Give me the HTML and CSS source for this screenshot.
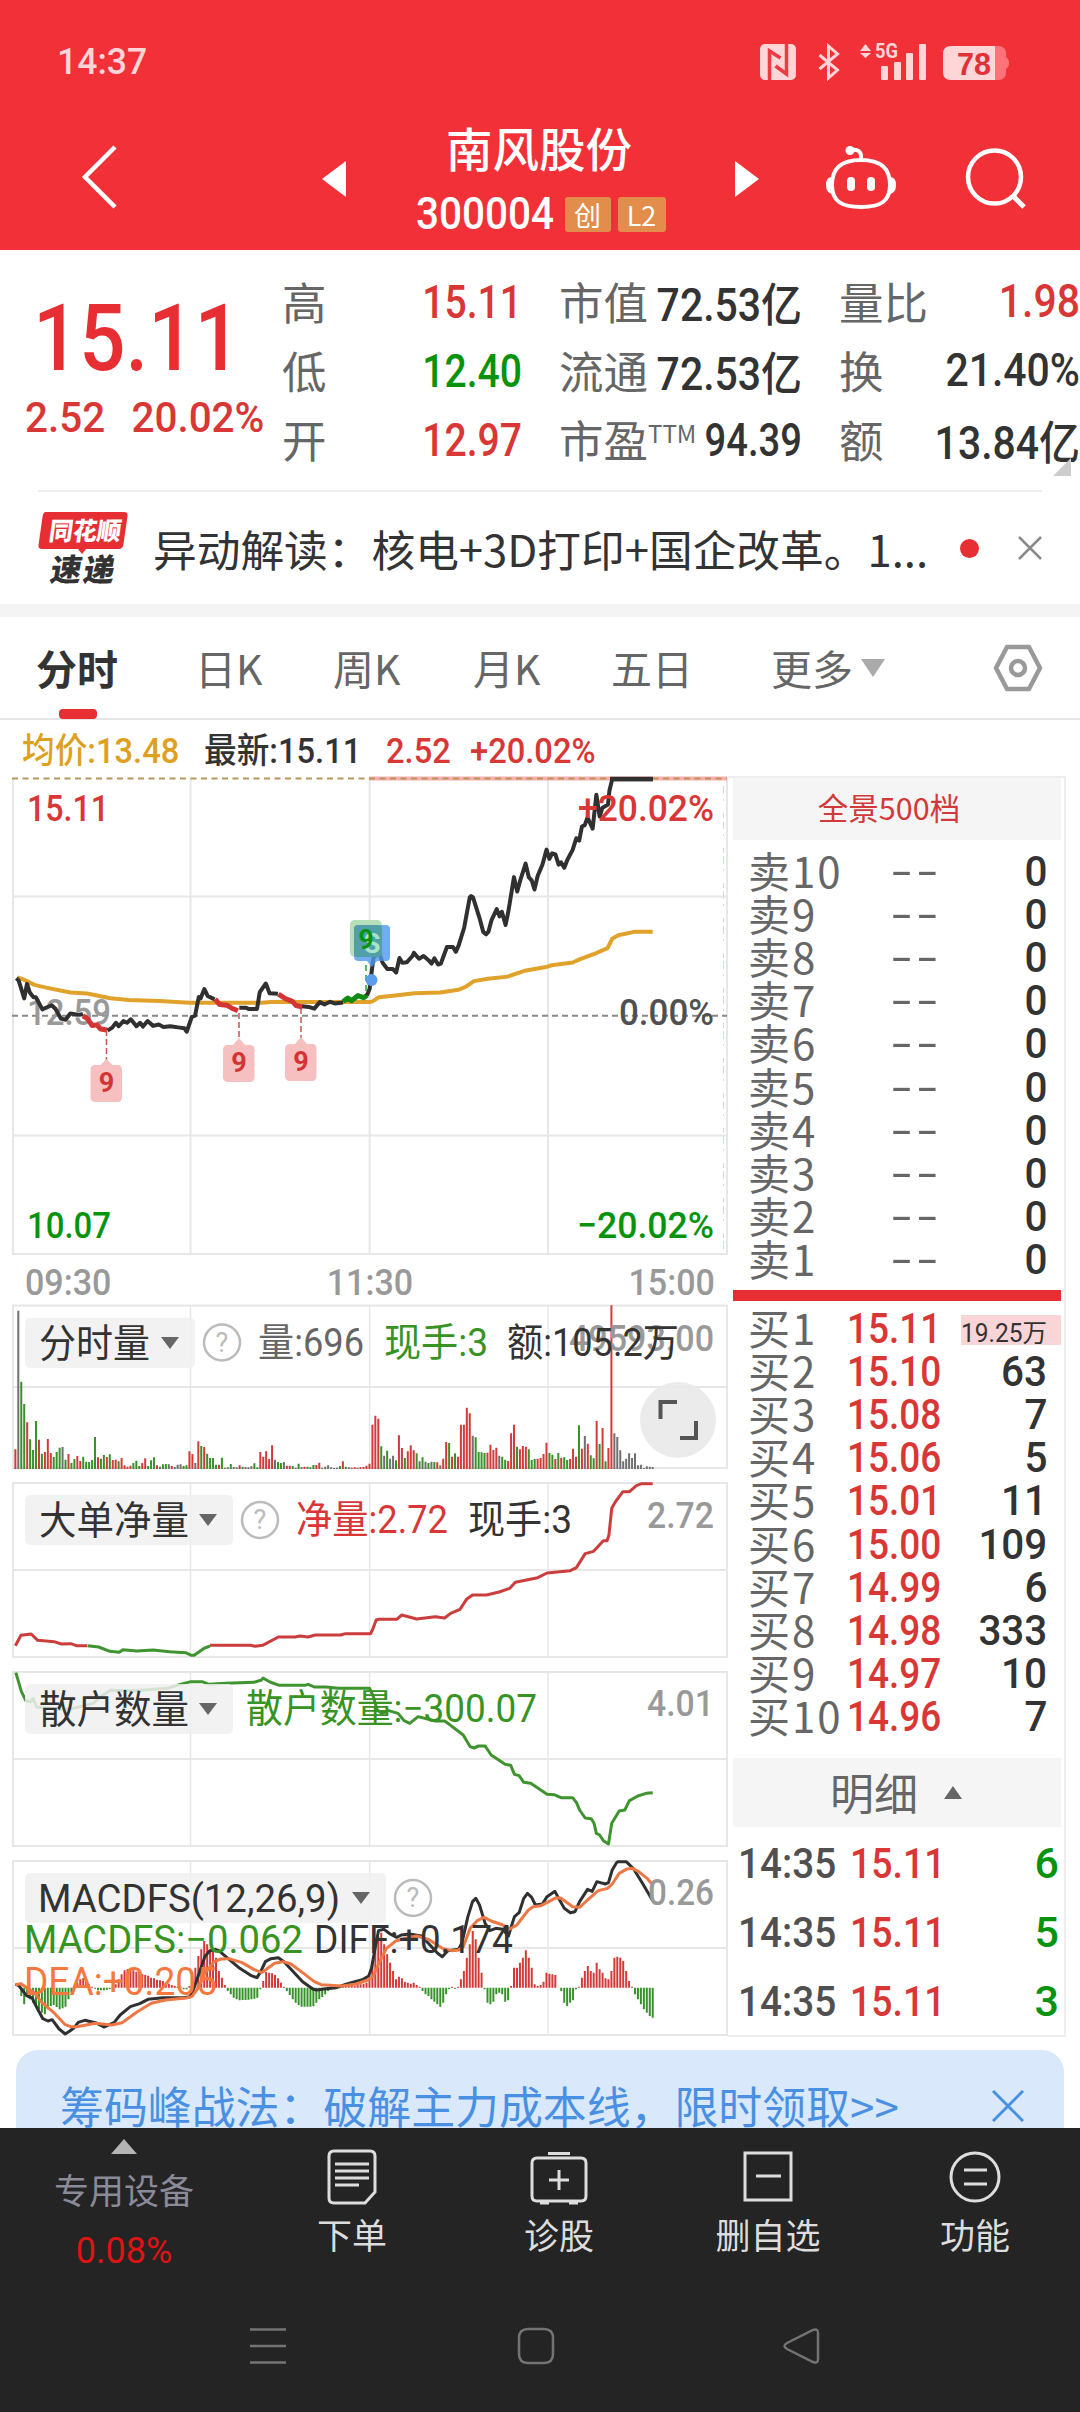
FILE: index.html
```html
<!DOCTYPE html>
<html lang="zh-CN">
<head>
<meta charset="utf-8">
<title>南风股份 300004</title>
<link rel="stylesheet" href="styles.css">
</head>
<body>
<div class="phone">
  <header class="top">
    <div class="status">
      <span class="clock">14:37</span>
      <svg class="status-icons" width="256" height="46" viewBox="756 40 256 46">
        <g fill="#ffd5d7">
          <rect x="760" y="44" width="36" height="36" rx="5"/>
          <path d="M860 51l5.500-7 5.500 7zM860 53l5.500 5 5.500-5z"/>
          <rect x="881" y="66" width="7" height="14" rx="1"/><rect x="894" y="62" width="7" height="18" rx="1"/>
          <rect x="906" y="53" width="7" height="27" rx="1"/><rect x="919" y="44" width="7" height="36" rx="1"/>
          <text x="875" y="58" class="net" textLength="23" lengthAdjust="spacingAndGlyphs">5G</text>
          <path d="M951 46h44v34h-44q-8 0-8-8v-18q0-8 8-8z"/>
        </g>
        <path d="M819.500 55l18 15-9 8V46l9 8-18 15" fill="none" stroke="#ffd5d7" stroke-width="3"/>
        <path d="M995 46h3q8 0 8 8v3q3 2 3 6t-3 6v3q0 8-8 8h-3z" fill="#ff7378"/>
        <path d="M769.500 80V51l11 7M786.500 44v30l-11-8" fill="none" stroke="#ef3a41" stroke-width="3.500"/>
        <text x="957" y="75" class="batt" textLength="34" lengthAdjust="spacingAndGlyphs">78</text>
      </svg>
    </div>
    <div class="titlebar">
      <svg class="back" width="40" height="68" viewBox="0 0 40 68"><path d="M35 4L5 34l30 30" fill="none" stroke="#fff" stroke-width="4.500"/></svg>
      <svg class="prev" width="24" height="36" viewBox="0 0 24 36"><path d="M24 0v36L0 18z" fill="#fff"/></svg>
      <div class="name">
        <h1>南风股份</h1>
        <div class="code"><span class="n">300004</span><b>创</b><b>L2</b></div>
      </div>
      <svg class="next" width="24" height="36" viewBox="0 0 24 36"><path d="M0 0v36l24-18z" fill="#fff"/></svg>
      <svg class="robot" width="72" height="66" viewBox="825 145 72 66">
        <path d="M861 160c-20 0-29 8-29 25 0 16 9 22 29 22s29-6 29-22c0-17-9-25-29-25zM861 159c1-8-4-10-9-9" fill="none" stroke="#fff" stroke-width="4"/>
        <circle cx="850" cy="150.500" r="4.500" fill="#fff"/><path d="M832 177q-6 0-6 8t6 9zM890 177q6 0 6 8t-6 9z" fill="#fff"/>
        <rect x="847" y="177" width="8" height="14" rx="4" fill="#fff"/><rect x="867" y="177" width="8" height="14" rx="4" fill="#fff"/>
      </svg>
      <svg class="search" width="62" height="62" viewBox="964 147 62 62"><circle cx="994.500" cy="177" r="26.500" fill="none" stroke="#fff" stroke-width="4.500"/><path d="M1013 196l11 11" stroke="#fff" stroke-width="5"/></svg>
    </div>
  </header>

  <section class="quote">
    <div class="last">
      <div class="price n">15.11</div>
      <div class="change n"><span>2.52</span><span>20.02%</span></div>
    </div>
    <dl class="c1">
      <div><dt>高</dt><dd class="n up">15.11</dd></div>
      <div><dt>低</dt><dd class="n down">12.40</dd></div>
      <div><dt>开</dt><dd class="n up">12.97</dd></div>
    </dl>
    <dl class="c2">
      <div><dt>市值</dt><dd class="n">72.53亿</dd></div>
      <div><dt>流通</dt><dd class="n">72.53亿</dd></div>
      <div><dt>市盈<sup>TTM</sup></dt><dd class="n pe">94.39</dd></div>
    </dl>
    <dl class="c3">
      <div><dt>量比</dt><dd class="n up">1.98</dd></div>
      <div><dt>换</dt><dd class="n">21.40%</dd></div>
      <div><dt>额</dt><dd class="n">13.84亿</dd></div>
    </dl>
    <i class="corner"></i>
  </section>

  <section class="news">
    <svg width="90" height="74" viewBox="38 510 90 74">
      <path d="M46 511h78q4 0 3.500 4l-4 28q-.5 5-5 5H86l-4 5-4-5H42q-4 0-3.500-4l4-28q.5-5 3.500-5z" fill="#e72e33"/>
      <text class="brand" transform="translate(48 539) skewX(-8)" textLength="72" lengthAdjust="spacingAndGlyphs" fill="#fff">同花顺</text>
      <text class="brand2" transform="translate(49 580) skewX(-10)" textLength="64" fill="#333">速递</text>
    </svg>
    <p>异动解读：核电+3D打印+国企改革。1...</p>
    <i class="dot"></i>
    <svg class="x" width="26" height="26" viewBox="0 0 26 26"><path d="M2 2l22 22M24 2L2 24" stroke="#8a8a8a" stroke-width="2.500"/></svg>
  </section>

  <nav class="tabs">
    <span class="on">分时</span><span>日K</span><span>周K</span><span>月K</span><span>五日</span><span>更多<i></i></span>
    <svg width="50" height="48" viewBox="0 0 50 48"><path d="M14 3h22l11 21-11 21H14L3 24z" fill="none" stroke="#999" stroke-width="4.500" stroke-linejoin="round"/><circle cx="25" cy="24" r="7" fill="none" stroke="#999" stroke-width="4.500"/></svg>
  </nav>

  <div class="legend n"><span class="avg">均价:13.48</span><span class="cur">最新:15.11</span><span class="up d1">2.52</span><span class="up d2">+20.02%</span></div>

  <main class="board">
    <div class="charts">
      <svg class="main" width="716" height="482" viewBox="12 776 716 482">
        <g class="grid"><path d="M13 778V1254H727V778M190.500 778v476M369.600 778v476M548 778v476M13 896.500h714M13 1135.500h714"/></g>
        <path d="M369 778.500H727" stroke="#f6aeb0" stroke-width="4"/>
        <path d="M12 778.500H727" stroke="#b79757" stroke-width="2" stroke-dasharray="6 4.500"/>
        <path d="M12 1015.700H727" stroke="#888" stroke-width="2" stroke-dasharray="6 4"/>
        <path d="M723.500 786V1252" stroke="#f3cccd" stroke-width="1" stroke-dasharray="8 5 2 12 5 3"/>
        <text class="t up" x="27" y="821" textLength="82" lengthAdjust="spacingAndGlyphs">15.11</text>
        <text class="t gray" x="27" y="1025" textLength="84" lengthAdjust="spacingAndGlyphs">12.59</text>
        <g class="trace" transform="translate(0 770) scale(.46556 .34439)">
          <path class="yellow" d="M37 602L50 608 74 624 99 632 151 646 187 649 237 663 277 668 342 671 407 676H562L582 674H794L800 672 814 660 854 654 890 648 945 646 985 638 1000 630 1018 613 1048 606 1090 600 1130 582 1170 573 1185 567 1230 559 1245 550 1275 535 1305 517 1315 490 1328 480 1362 470H1402"/>
          <path class="black" d="M35 605l5 6 12 52 6-42 6 25 8 14 5 0 14 35 20-12 8 10 12 29 10 3 10-18 20 4 7-3"/>
          <path class="redl" d="M178 714l10 8 10 20 10-2 8 12 14 3"/>
          <path class="black" d="M231 757l10-9 8-14 6 10 10-15 8 5 8-10 12 20 8-10 6 11 10-16 12 14 12-4 10 7 15-2 20 4 10 2 5 10 11-43 7-4 8-54 4 4 8-27 7 20 15 10"/>
          <path class="redl" d="M462 665l10 16 15 2 10 8 14 8"/>
          <path class="black" d="M514 690h14l6 4h18l6-49 13-25 8 28 18 2"/>
          <path class="redl" d="M598 651l15 13 15 8 8 12 14 4"/>
          <path class="black" d="M649 686l14 2 12 5 12-19 10 7 12-8 10 5 18-3"/>
          <path class="greenl" d="M737 672l10-10 8 8 14-15 12 6 8-7"/>
          <path class="black" d="M788 655L794 635 802 545 814 530 822 560 832 578H844L851 588 858 546 864 560 874 558 886 540 889 531 900 548 910 540 921 553 927 562 933 547 941 565 947 562 960 514H973L979 528 985 510 997 458 1009 370 1012 366 1016 370 1030 430 1038 470 1044 477 1049 470 1056 435 1067 404 1073 425 1078 412 1086 450 1092 410 1104 311 1111 353 1118 318 1129 272 1136 312 1142 320 1148 347 1155 307 1165 275 1174 231 1180 258 1186 242 1193 245 1200 275 1205 268 1212 284 1219 260 1230 232 1238 198 1244 205 1250 164 1256 160 1262 138 1273 170 1281 72 1288 135 1294 110 1306 100 1309 60 1315 27H1402"/>
        </g>
        <path d="M610 779h43" stroke="#303030" stroke-width="4.500"/>
        <g class="mark">
          <path class="lead" d="M106.500 1030v32M239 1013v27M301 1008v31"/>
          <path d="M106.500 1059l6 6h5q4.500 0 4.500 5v27q0 5-4.500 5h-22q-5 0-5-5v-27q0-5 5-5h5zM239 1038l6 7h5q4.500 0 4.500 5v27q0 5-4.500 5h-22q-5 0-5-5v-27q0-5 5-5h5zM301 1037l6 7h5q4.500 0 4.500 5v27q0 5-4.500 5h-22q-5 0-5-5v-27q0-5 5-5h5z"/>
          <text x="106.500" y="1092">9</text><text x="239" y="1072">9</text><text x="301" y="1071">9</text>
        </g>
        <rect x="350" y="920" width="32" height="37" rx="5" fill="#b4dfb9"/>
        <path d="M359 925h27q4 0 4 4v28q0 4-4 4h-9l-5 6-5-6h-8q-5 0-5-4v-28q0-4 5-4z" fill="#4f98eb" opacity=".8"/>
        <rect x="354" y="925" width="28" height="32" rx="4" fill="#4e9f98" opacity=".8"/>
        <path d="M366 965v30" stroke="#58b868" stroke-width="2" stroke-dasharray="6 4"/>
        <circle cx="371.500" cy="980" r="6" fill="#5b9ceb"/>
        <text x="372" y="953" class="mt" fill="#a9e2cf">S</text><text x="366" y="949" class="mt" fill="#08930f">9</text>
        <text class="t up" x="578" y="821" textLength="136" lengthAdjust="spacingAndGlyphs">+20.02%</text>
        <text class="t" x="619" y="1025" textLength="95" lengthAdjust="spacingAndGlyphs" fill="#505050">0.00%</text>
        <text class="t down" x="27" y="1238" textLength="84" lengthAdjust="spacingAndGlyphs">10.07</text>
        <text class="t down" x="577" y="1238" textLength="137" lengthAdjust="spacingAndGlyphs">−20.02%</text>
      </svg>
      <div class="times n"><span>09:30</span><span>11:30</span><span>15:00</span></div>

      <svg width="716" height="166" viewBox="12 1304 716 166">
        <g class="grid"><path d="M13 1305.500H727V1468H13zM13 1387H727"/><path class="v" d="M190.500 1306v162M369.600 1306v162M548 1306v162"/></g>
        <g id="volume" transform="translate(0 1290) scale(.46556 .33333)"></g>
        <rect class="chip" x="25" y="1318" width="170" height="50"/>
        <text class="c" x="39" y="1357" textLength="111" lengthAdjust="spacingAndGlyphs">分时量</text><path class="tri" d="M161 1337h18l-9 12z"/>
        <circle class="q" cx="222" cy="1342.500" r="18"/><text class="qt" x="222" y="1352">?</text>
        <text class="t gray" x="569" y="1351" textLength="145" lengthAdjust="spacingAndGlyphs">49593.00</text>
        <text class="c" x="258" y="1356" textLength="106" lengthAdjust="spacingAndGlyphs" fill="#666">量:696</text>
        <text class="c" x="384" y="1356" textLength="104" lengthAdjust="spacingAndGlyphs" fill="#379322">现手:3</text>
        <text class="c" x="507" y="1356" textLength="172" lengthAdjust="spacingAndGlyphs">额:105.2万</text>
        <circle cx="678" cy="1420" r="38" fill="#e9e9e9" opacity=".9"/><path d="M660.500 1419v-17H677M696 1421v17H680" fill="none" stroke="#555" stroke-width="4"/>
      </svg>

      <svg class="s2" width="716" height="178" viewBox="12 1481 716 178">
        <g class="grid"><path d="M13 1483H727V1657H13zM13 1570H727"/><path class="v" d="M190.500 1483v174M369.600 1483v174M548 1483v174"/></g>
        <g class="trace thin" transform="translate(0 1290) scale(.46556 .33333)">
          <path class="r2" d="M33 1067l12-31 22-4 14 19 35 4 16 7 20-1 12 6h23"/>
          <path class="g2" d="M188 1067l24 4 24 13 20 3 8-8 30 4 35-3 35 5 35 3 12 8h6l20-20 14-8"/>
          <path class="r2" d="M451 1066H538L548 1069 564 1066 598 1041H634L644 1038 662 1041 677 1035H732L742 1031H796L800 1020 808 990 814 988H852L863 975 895 987 935 980 955 984 968 970 988 958 1002 928 1015 915H1045L1072 906 1095 895 1107 877 1155 863 1175 849 1225 842 1238 833 1257 791 1275 784 1296 752H1304L1308 735 1314 655 1322 635 1338 605H1352L1367 587 1378 581H1402"/>
        </g>
        <rect class="chip" x="25" y="1495" width="208" height="50"/>
        <text class="c" x="39" y="1534" textLength="150" lengthAdjust="spacingAndGlyphs">大单净量</text><path class="tri" d="M199 1514h18l-9 12z"/>
        <circle class="q" cx="260" cy="1520" r="18"/><text class="qt" x="260" y="1529">?</text>
        <text class="c up" x="296" y="1533" textLength="152" lengthAdjust="spacingAndGlyphs">净量:2.72</text>
        <text class="c" x="468" y="1533" textLength="104" lengthAdjust="spacingAndGlyphs">现手:3</text>
        <text class="t gray" x="647" y="1528" textLength="67" lengthAdjust="spacingAndGlyphs">2.72</text>
      </svg>

      <svg class="s3" width="716" height="178" viewBox="12 1670 716 178">
        <g class="grid"><path d="M13 1672H727V1846H13zM13 1759H727"/><path class="v" d="M190.500 1672v174M369.600 1672v174M548 1672v174"/></g>
        <g class="trace thin" transform="translate(0 1660) scale(.46556 .33333)">
          <path class="g2" d="M34 38L46 95 56 123 66 125 71 115 79 141 120 148 155 146 200 130 216 110 237 91 290 92 360 85 385 74 410 65H434L449 73 485 70 545 67 562 60 565 54 580 66 600 76H655L662 73 675 81H700L727 85H794L802 110 810 150 820 160 835 152 855 160 868 182 880 190 898 170 935 183H955L965 193 995 225 1010 260 1018 264 1028 258H1042L1055 285 1085 313 1097 316 1105 343 1115 347 1125 367 1140 370 1175 403 1190 404 1205 413H1230L1238 427 1245 450 1257 474 1270 476 1276 490 1281 520 1288 525 1296 542 1307 552 1314 490 1330 453 1342 450 1352 422 1370 408 1388 400 1402 398"/>
        </g>
        <rect class="chip" x="25" y="1684" width="208" height="50"/>
        <text class="c" x="39" y="1723" textLength="150" lengthAdjust="spacingAndGlyphs">散户数量</text><path class="tri" d="M199 1703h18l-9 12z"/>
        <text class="c" x="246" y="1722" textLength="291" lengthAdjust="spacingAndGlyphs" fill="#379322">散户数量:−300.07</text>
        <text class="t gray" x="647" y="1716" textLength="67" lengthAdjust="spacingAndGlyphs">4.01</text>
      </svg>

      <svg class="s4" width="716" height="178" viewBox="12 1859 716 178">
        <g class="grid"><path d="M13 1861H727V2035H13zM13 1948H727"/><path class="v" d="M190.500 1861v174M369.600 1861v174M548 1861v174"/></g>
        <g id="macd" transform="translate(0 1660) scale(.46556 .33333)"></g>
        <g class="trace" transform="translate(0 1660) scale(.46556 .33333)">
          <path class="black m" d="M33 972L41 978 57 1007 69 1014 80 1045 92 1076 103 1083 112 1079 127 1107 140 1122 150 1113 158 1105 168 1087 182 1081 205 1088 223 1101 245 1088 258 1065 280 1040 300 1031 318 1018 350 1013 395 1013 408 1010 415 990 425 950 440 890 450 873 462 868 470 872 487 892 515 925 540 947 552 953 560 935 570 905 582 896 598 893 610 905 630 935 650 965 672 987 680 990 700 986 722 983 745 972 780 958 792 948 798 925 805 870 813 812 825 808 838 822 852 832 862 825 880 822 905 828 920 850 940 880 950 890 962 872 985 868 992 850 1005 770 1015 725 1022 715 1030 735 1042 790 1052 812 1065 805 1080 808 1092 828 1105 770 1115 758 1125 715 1133 700 1142 712 1150 735 1165 732 1175 710 1192 694 1200 715 1212 745 1225 758 1235 755 1245 725 1262 688 1272 694 1282 665 1300 672 1307 668 1315 630 1325 607 1328 605H1345L1360 625 1380 670 1402 722"/>
          <path class="org" d="M33 974L45 971 75 1000 90 1028 115 1057 140 1094 152 1100 165 1100 205 1090 240 1095 262 1088 295 1055 325 1030 355 1020 400 1014 412 1010 425 985 440 940 460 905 475 897 492 896 520 908 545 928 562 938 575 925 590 910 608 905 625 912 650 938 675 965 690 974 735 978 765 972 790 960 802 948 812 915 830 865 850 843 870 835 895 828 920 838 950 865 970 872 985 870 995 860 1010 805 1025 782 1040 772 1055 783 1080 795 1095 807 1110 795 1135 750 1145 740 1162 737 1195 713 1205 715 1230 740 1245 742 1262 720 1285 692 1305 685 1315 672 1330 640 1345 628 1358 625 1372 635 1390 655 1402 675"/>
        </g>
        <text class="t gray" x="648" y="1905" textLength="66" lengthAdjust="spacingAndGlyphs">0.26</text>
        <rect class="chip" x="25" y="1873" width="361" height="50"/>
        <text class="c" x="38" y="1912" textLength="302" lengthAdjust="spacingAndGlyphs">MACDFS(12,26,9)</text><path class="tri" d="M352 1892h18l-9 12z"/>
        <circle class="q" cx="413" cy="1898" r="18"/><text class="qt" x="413" y="1907">?</text>
        <text class="c" x="24" y="1953" textLength="279" lengthAdjust="spacingAndGlyphs" fill="#379322">MACDFS:−0.062</text>
        <text class="c" x="314" y="1953" textLength="199" lengthAdjust="spacingAndGlyphs">DIFF:+0.174</text>
        <text class="c" x="24" y="1995" textLength="193" lengthAdjust="spacingAndGlyphs" fill="#f5793e">DEA:+0.205</text>
      </svg>
    </div>

    <aside class="book">
      <div class="pano">全景500档</div>
      <div class="rows sell">
        <div><span>卖10</span><i>--</i><b class="n">0</b></div>
        <div><span>卖9</span><i>--</i><b class="n">0</b></div>
        <div><span>卖8</span><i>--</i><b class="n">0</b></div>
        <div><span>卖7</span><i>--</i><b class="n">0</b></div>
        <div><span>卖6</span><i>--</i><b class="n">0</b></div>
        <div><span>卖5</span><i>--</i><b class="n">0</b></div>
        <div><span>卖4</span><i>--</i><b class="n">0</b></div>
        <div><span>卖3</span><i>--</i><b class="n">0</b></div>
        <div><span>卖2</span><i>--</i><b class="n">0</b></div>
        <div><span>卖1</span><i>--</i><b class="n">0</b></div>
      </div>
      <div class="split"></div>
      <div class="rows buy">
        <div><span>买1</span><em class="n">15.11</em><b class="n hot">19.25万</b></div>
        <div><span>买2</span><em class="n">15.10</em><b class="n">63</b></div>
        <div><span>买3</span><em class="n">15.08</em><b class="n">7</b></div>
        <div><span>买4</span><em class="n">15.06</em><b class="n">5</b></div>
        <div><span>买5</span><em class="n">15.01</em><b class="n">11</b></div>
        <div><span>买6</span><em class="n">15.00</em><b class="n">109</b></div>
        <div><span>买7</span><em class="n">14.99</em><b class="n">6</b></div>
        <div><span>买8</span><em class="n">14.98</em><b class="n">333</b></div>
        <div><span>买9</span><em class="n">14.97</em><b class="n">10</b></div>
        <div><span>买10</span><em class="n">14.96</em><b class="n">7</b></div>
      </div>
      <div class="detail">明细<i></i></div>
      <div class="ticks n">
        <div><span>14:35</span><em>15.11</em><b>6</b></div>
        <div><span>14:35</span><em>15.11</em><b>5</b></div>
        <div><span>14:35</span><em>15.11</em><b>3</b></div>
      </div>
    </aside>
  </main>

  <div class="promo"><p>筹码峰战法：破解主力成本线，限时领取&gt;&gt;</p>
    <svg width="32" height="32" viewBox="0 0 32 32"><path d="M1 1l30 30M31 1L1 31" stroke="#4a90e2" stroke-width="3"/></svg>
  </div>

  <footer>
    <div class="actions">
      <div class="sector"><i></i><span>专用设备</span><b>0.08%</b></div>
      <div><svg width="58" height="60" viewBox="0 0 58 60"><path d="M11 5h36q5 0 5 5v36L42 57H11q-5 0-5-5V10q0-5 5-5zM12 18h34M12 25h34M12 32h34M12 39h24"/></svg><span>下单</span></div>
      <div><svg width="62" height="60" viewBox="0 0 62 60"><path d="M9 12h44q5 0 5 5v33q0 5-5 5H9q-5 0-5-5V17q0-5 5-5zM20 7.500h22M31 24v20M21 34h20M12 57h9M41 57h9"/></svg><span>诊股</span></div>
      <div><svg width="56" height="60" viewBox="0 0 56 60"><path d="M5 7h46v47H5zM16 30h25"/></svg><span>删自选</span></div>
      <div><svg width="56" height="60" viewBox="0 0 56 60"><circle cx="28" cy="31" r="24"/><path d="M17 24h23M17 38h23"/></svg><span>功能</span></div>
    </div>
    <svg class="sysnav" width="1080" height="60" viewBox="0 2317 1080 60">
      <path d="M250 2329.500h36M250 2346h36M250 2362.500h36M528 2329h16q9 0 9 9v16q0 9-9 9h-16q-9 0-9-9v-16q0-9 9-9zM787 2343l26-13q5-2 5 3v26q0 5-5 3l-26-13q-5-3 0-6z"/>
    </svg>
  </footer>
</div>
<script src="charts.js"></script>
</body>
</html>
```
FILE: styles.css
```css
* { box-sizing: border-box; }
body { margin: 0; background: #fff; }
h1, p, dl, dd { margin: 0; }
i, em { font-style: normal; }
.phone { width: 1080px; height: 2412px; overflow: hidden; display: flex; flex-direction: column; color: #333; font-family: "Noto Sans CJK SC", sans-serif; }
.n, .clock { font-family: Roboto, "Noto Sans CJK SC", sans-serif; font-weight: 500; }
.up { color: #d93636; fill: #d93636; }
.down { color: #08930f; fill: #08930f; }

.top { height: 250px; flex: none; background: #f13037; }
.status { height: 112px; padding: 40px 68px 0 57px; display: flex; justify-content: space-between; }
.clock { color: #ffd5d7; font-size: 37px; line-height: 44px; transform: scaleX(.96); transform-origin: left; }
.net { font: 700 21px Roboto, sans-serif; }
.batt { font: 700 31px "Liberation Sans", sans-serif; fill: #e03138; }
.titlebar { height: 138px; display: grid; grid-template-columns: 80px 242px 24px 389px 24px 66px 72px 67px 62px; align-items: start; color: #fff; }
.titlebar > svg { margin-top: 49px; }
.titlebar > .back { grid-column: 2; margin-top: 31px; }
.titlebar > .prev { grid-column: 3; }
.titlebar > .name { grid-column: 4; }
.titlebar > .next { grid-column: 5; }
.titlebar > .robot { grid-column: 7; margin-top: 33px; }
.titlebar > .search { grid-column: 9; margin-top: 35px; }
.name { text-align: center; }
.name h1 { font-size: 46.500px; line-height: 56px; font-weight: 500; margin-top: 7px; margin-left: -3px; }
.code { display: flex; justify-content: center; align-items: center; gap: 7px; height: 50px; margin-top: 14px; }
.code .n { font-size: 45px; line-height: 46px; width: 142px; transform: scaleX(.9); transform-origin: left; }
.code b { background: #e28d4b; border-radius: 3px; font-size: 27px; font-weight: 400; line-height: 35px; height: 35px; width: 46px; }
.code b + b { width: 48px; }

.quote { position: relative; height: 242px; flex: none; display: grid; grid-template-columns: 282px 240px 280px 278px; }
.quote::after { content: ""; position: absolute; left: 38px; right: 38px; bottom: 0; height: 2px; background: #eee; }
.last { padding: 43px 0 0 25px; color: #e72e33; }
.price { font-size: 92px; line-height: 92px; height: 101px; padding-left: 9px; transform: scaleX(.885); transform-origin: left; width: 250px; }
.change { display: flex; gap: 28px; font-size: 43px; line-height: 46px; color: #d93636; transform: scaleX(.94); transform-origin: left; width: 250px; }
.quote dl { padding-top: 17px; }
.quote dl div { height: 69px; display: flex; justify-content: space-between; align-items: center; font-size: 46px; white-space: nowrap; }
.quote dt { color: #666; font-size: 44.500px; flex: none; margin-top: -3px; }
.quote dd { width: 0; display: flex; justify-content: flex-end; transform: scaleX(.85); transform-origin: right; }
.quote .c2 dd, .quote .c3 dd { transform: scaleX(.89); margin-top: -2px; }
.quote .c2 .pe { transform: scaleX(.83); margin-top: 0; }
.quote .c2, .quote .c3 { padding-left: 37px; }
.quote sup { font-size: 24px; line-height: 0; vertical-align: 15px; }
.corner { position: absolute; right: 9px; bottom: 16px; border: 9px solid #ccc; border-top-color: transparent; border-left-color: transparent; }

.news { height: 112px; flex: none; display: flex; align-items: center; padding: 0 35px 0 38px; }
.news svg { flex: none; }
.brand { font: 900 25px "Noto Sans CJK SC", sans-serif; }
.brand2 { font: 900 31px "Noto Sans CJK SC", sans-serif; }
.news p { font-size: 43.700px; margin-left: 25px; width: 807px; white-space: nowrap; line-height: 60px; }
.dot { width: 19px; height: 19px; border-radius: 50%; background: #e72e33; margin-right: 38px; flex: none; }

.tabs { height: 116px; flex: none; border-top: 13px solid #f4f4f4; border-bottom: 2px solid #e5e5e5; position: relative; display: flex; align-items: center; padding-left: 36px; font-size: 41px; color: #666; }
.tabs span { position: relative; white-space: nowrap; width: 138px; top: -1px; }
.tabs span:nth-child(1) { width: 159px; }
.tabs span:nth-child(3) { width: 140px; }
.tabs span:nth-child(5) { width: 160px; }
.tabs span:nth-child(6) { width: 222px; }
.tabs .on { color: #333; font-weight: 700; }
.tabs .on::after { content: ""; position: absolute; left: 23px; bottom: -22px; width: 38px; height: 10px; border-radius: 4px; background: #e72e33; }
.tabs i { display: inline-block; border: 12px solid transparent; border-bottom: 0; border-top: 18px solid #aaa; margin-left: 8px; vertical-align: 8px; }

.legend { height: 56px; flex: none; display: flex; padding-left: 22px; font-size: 35.500px; line-height: 63px; white-space: nowrap; }
.legend span { transform: scaleX(.92); transform-origin: left; }
.legend .avg { color: #dfa020; width: 182px; }
.legend .cur { width: 182px; }
.legend .d1 { width: 84px; }

.board { flex: none; height: 1261px; display: flex; padding-left: 12px; }
.charts { width: 716px; display: flex; flex-direction: column; }
.charts svg { display: block; flex: none; }
.charts .s2, .charts .s3, .charts .s4 { margin-top: 11px; }
.grid path { fill: none; stroke: #e7e7e7; stroke-width: 2; }
.grid .v { stroke-width: 1.500px; }
.trace path { fill: none; stroke-width: 4px; vector-effect: non-scaling-stroke; stroke-linejoin: round; }
.trace.thin path { stroke-width: 3px; }
.trace .yellow { stroke: #e0a22b; }
.trace .black { stroke: #303030; }
.trace .m, .trace .org { stroke-width: 3px; }
.trace .org { stroke: #ed7845; }
.trace .redl { stroke: #d43434; stroke-width: 5px; }
.trace .greenl { stroke: #108a10; stroke-width: 5px; }
.trace .r2 { stroke: #cc3d3d; }
.trace .g2 { stroke: #3f9430; }
.t { font: 500 37px Roboto, sans-serif; }
.gray { fill: #999; }
.c { font: 400 39px Roboto, "Noto Sans CJK SC", sans-serif; }
.c:not([fill]):not(.up) { fill: #333; }
.chip { fill: #f0f0f0; fill-opacity: .85; rx: 5px; }
.tri { fill: #666; }
.q { fill: none; stroke: #bbb; stroke-width: 2.500px; }
.qt { font: 400 27px Roboto, sans-serif; fill: #bbb; text-anchor: middle; }
.mark path { fill: #f6c0c1; }
.mark .lead { fill: none; stroke: #c95454; stroke-width: 1.500px; stroke-dasharray: 6 3; }
.mark text, .mt { font: 700 27px Roboto, sans-serif; text-anchor: middle; }
.mark text { fill: #d43434; }
.times { height: 46px; display: flex; justify-content: space-between; align-items: center; padding: 2px 13px 0 13px; font-size: 37px; color: #999; }
.times span { transform: scaleX(.92); transform-origin: left; }
.times span:nth-child(2) { transform-origin: center; }
.times span:nth-child(3) { transform-origin: right; }
#volume path, #macd path { fill: none; stroke-width: 4.300px; }
.bar-r { stroke: #d33a3a; }
.bar-g { stroke: #37922a; }
.bar-k { stroke: #707070; }

.book { width: 338px; border: 2px solid #eee; border-left: 0; height: 1261px; }
.pano { margin-left: 5px; width: 328px; height: 62px; background: #f5f5f5; color: #d03a3a; text-align: center; padding-right: 16px; font-size: 30.500px; line-height: 58px; }
.rows { height: 431px; margin-top: 10px; display: flex; flex-direction: column; padding: 0 17px 0 20px; }
.rows div { height: 43.100px; display: flex; align-items: center; position: relative; font-size: 42px; line-height: 43px; white-space: nowrap; }
.rows span { width: 99px; color: #666; letter-spacing: 2px; flex: none; margin-top: -4px; }
.rows i { color: #666; font-family: Roboto, sans-serif; margin-left: 45px; transform: scaleX(1.650); transform-origin: left; letter-spacing: 4px; }
.rows b, .rows em { font-size: 43px; }
.rows b { margin-left: auto; transform: scaleX(.94); transform-origin: right; }
.rows em { color: #d93636; width: 97px; transform: scaleX(.86); transform-origin: left; }
.split { height: 11px; background: #e72e33; margin: 9px 3px 0 5px; width: 328px; }
.rows.buy { margin-top: 6px; }
.rows .hot { background: #f9d5d7; font-size: 25px; height: 30px; line-height: 38px; width: 102px; margin-right: -14px; padding-left: 0; font-weight: 400; position: relative; top: 1px; transform: scaleX(.98); }
.detail { margin: 20px 0 0 5px; width: 328px; height: 69px; background: #f5f5f5; color: #666; font-size: 44px; line-height: 69px; padding-left: 97px; }
.detail i { display: inline-block; border: 9px solid transparent; border-top: 0; border-bottom: 13px solid #666; margin-left: 26px; vertical-align: 12px; }
.ticks { padding: 1px 5px 0 10px; font-size: 43px; }
.ticks div { height: 69px; display: flex; align-items: center; }
.ticks span { width: 112px; color: #505050; transform: scaleX(.9); transform-origin: left; }
.ticks em { color: #d93636; transform: scaleX(.87); transform-origin: left; }
.ticks b { margin-left: auto; font-weight: 500; color: #08930f; }

.promo { flex: none; height: 78px; margin: 13px 16px 0; background: #d9e8fb; border-radius: 22px 22px 0 0; overflow: hidden; display: flex; justify-content: space-between; padding: 0 40px 0 44px; color: #4a90e2; }
.promo p { font-size: 43.900px; line-height: 60px; margin-top: 25px; white-space: nowrap; }
.promo svg { margin-top: 40px; }

footer { flex: 1; background: #242424; }
.actions { height: 189px; display: grid; grid-template-columns: 248px 208px 206px 212px 202px; }
.actions div { display: flex; flex-direction: column; align-items: center; color: #ddd; font-size: 35px; line-height: 50px; padding-top: 18px; }
.actions span { margin-top: 3px; }
.actions svg { fill: none; stroke: #ddd; stroke-width: 3px; }
.actions .sector { padding-top: 11px; }
.sector i { border: 13px solid transparent; border-top: 0; border-bottom: 15px solid #b5b5b5; }
.sector span { color: #8a8a99; margin-top: 10px; }
.sector b { color: #dc1414; font: 400 36px/50px Roboto, sans-serif; margin-top: 12px; }
.sysnav { display: block; fill: none; stroke: #737373; stroke-width: 2.500px; }
```
FILE: charts.js
```js
// Per-minute series: height plus colour key (r up, g down, k flat).
const volume = `59r 475k 262g 195g 140r 89g 57g 144g 88r 46g 51r 90r 48r 36g 51g 64g 66k 28g 45r 18g 30g 39r 24r 37g 22g 21g 27g 96g 35r 31g 42g 36r 44g 27r 28r 23g 33r 11r 7r 10r 18g 25g 9g 18r 32r 9g 26g 35g 11r 7k 14g 15g 14k 9r 6k 13k 14k 9g 11g 53r 45r 18k 83r 69g 66r 46g 33g 33g 13g 13r 34g 4k 5k 15g 6k 5k 11r 7g 6k 5k 8k 17g 5g 51r 37r 53r 30r 71r 28k 21g 18g 21k 10r 10r 9g 4k 16g 6k 7r 7g 5k 12g 12r 19r 4k 7k 11k 5k 3k 4k 9g 23r 7g 5k 4r 5r 4k 5r 6r 10r 16r 133r 160r 151r 68g 40k 55g 31k 40k 26g 101r 63r 33g 53r 71r 56r 47g 23k 35g 22k 18g 22k 21g 20r 11k 31r 81r 78g 37r 47g 37r 133r 133r 184r 167r 100k 95g 51g 50g 48g 49r 73r 57r 64r 40k 37g 28g 24r 107r 133r 67g 59r 69r 67r 59g 27g 30g 31r 33r 45r 79r 48g 43g 30r 48g 34r 35g 27g 30r 61r 37r 131g 61r 99k 76r 41g 32g 144r 75g 123r 23g 63r 491r 107k 96k 56k 23k 31k 47k 33k 47k 11k 13k 3k 8k 7k 6k`.split(/\s+/);
const macd = [0,0,-25,-50,-25,-35,-45,-55,-65,-75,-80,-65,-55,-52,-58,-65,-62,-57,-35,-15,8,15,25,28,22,10,3,-3,-8,-8,-8,-6,-4,3,10,25,40,52,55,57,52,48,48,40,38,36,30,28,24,22,20,15,12,8,5,3,3,-5,-5,5,20,60,95,115,140,130,115,110,90,50,30,8,-10,-20,-30,-35,-38,-37,-37,-36,-35,-33,-30,-5,20,47,45,43,38,28,15,3,-10,-22,-35,-45,-52,-57,-57,-57,-57,-56,-45,-35,-28,-20,-10,-5,-4,-3,-2,3,4,4,5,6,8,10,12,15,30,80,130,155,165,130,100,75,50,25,33,28,18,15,12,15,8,3,-10,-20,-25,-35,-42,-50,-57,-45,-20,-5,3,-3,3,25,50,90,130,170,145,90,45,-5,-45,-50,-42,-20,-15,-20,-42,-38,5,60,60,75,90,112,90,60,10,5,8,18,45,42,40,38,0,-10,-45,-55,-45,-38,-5,3,30,50,65,50,45,75,55,45,28,25,50,90,93,90,80,50,20,3,-20,-35,-50,-65,-75,-85,-90];

function draw(id, bars, base) {
  const step = 1369 / (bars.length - 1);
  const d = { r: "", g: "", k: "" };
  bars.forEach(([h, c], i) => { d[c] += `M${(33 + i * step).toFixed(1)} ${base}v${-h}`; });
  const g = document.getElementById(id);
  for (const c in d) {
    const p = document.createElementNS("http://www.w3.org/2000/svg", "path");
    p.setAttribute("d", d[c]);
    p.setAttribute("class", "bar-" + c);
    g.append(p);
  }
}
draw("volume", volume.map(v => [parseInt(v), v.slice(-1)]), 537);
draw("macd", macd.map(v => [v, v < 0 ? "g" : "r"]), 983);
```
